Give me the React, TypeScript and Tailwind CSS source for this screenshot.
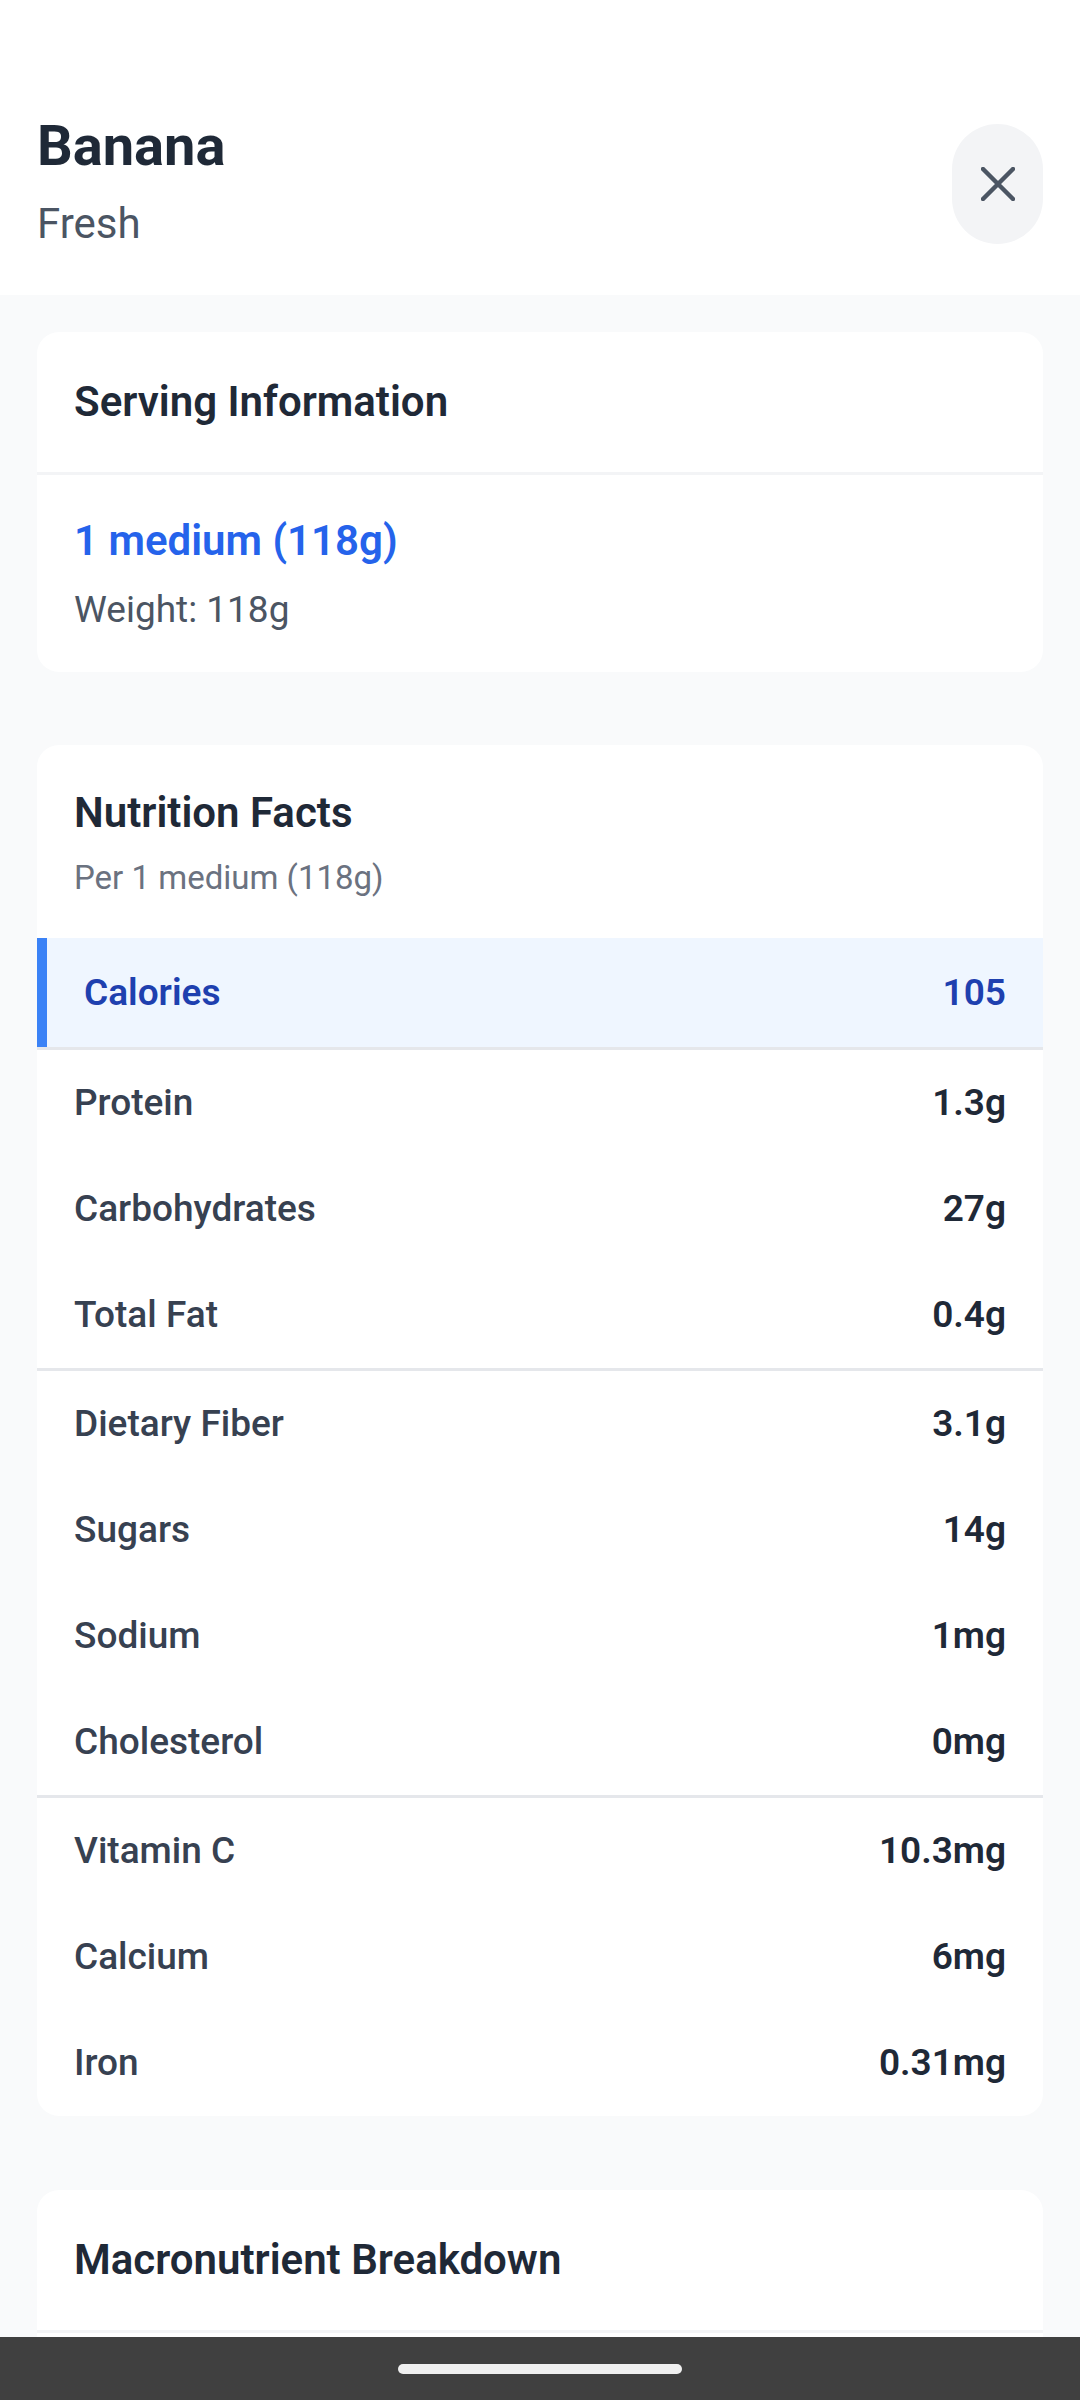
const rows: [string, string][][] = [
  [
    ["Protein", "1.3g"],
    ["Carbohydrates", "27g"],
    ["Total Fat", "0.4g"],
  ],
  [
    ["Dietary Fiber", "3.1g"],
    ["Sugars", "14g"],
    ["Sodium", "1mg"],
    ["Cholesterol", "0mg"],
  ],
  [
    ["Vitamin C", "10.3mg"],
    ["Calcium", "6mg"],
    ["Iron", "0.31mg"],
  ],
];

function Row({ label, value }: { label: string; value: string }) {
  return (
    <div className="flex h-[106px] items-center justify-between px-[37px]">
      <span className="text-[37px] font-medium leading-[50px] text-[#374151]">{label}</span>
      <span className="text-[37px] font-semibold leading-[50px] text-[#1f2937]">{value}</span>
    </div>
  );
}

export default function App() {
  return (
    <div
      className="relative flex h-[2400px] w-[1080px] flex-col overflow-hidden bg-[#f9fafb]"
      style={{ fontFamily: "Roboto, 'Noto Sans', sans-serif" }}
    >
      <header className="flex items-start justify-between bg-white px-[37px] pb-[46px] pt-[113px]">
        <div className="flex flex-col gap-[20px]">
          <h1 className="text-[56px] font-bold leading-[66px] text-[#1f2937]">Banana</h1>
          <p className="text-[42px] leading-[50px] text-[#4b5563]">Fresh</p>
        </div>
        <button
          className="mt-[11px] flex h-[120px] w-[91px] items-center justify-center rounded-full bg-[#f3f4f6]"
          aria-label="Close"
        >
          <svg width="34" height="34" viewBox="0 0 34 34" fill="none">
            <path d="M2 2L32 32M32 2L2 32" stroke="#4b5563" strokeWidth="4.5" strokeLinecap="round" />
          </svg>
        </button>
      </header>

      <main className="flex flex-col px-[37px] pt-[37px]">
        <section className="overflow-hidden rounded-[22px] bg-white">
          <div className="flex h-[143px] items-center border-b-[3px] border-[#f3f4f6] px-[37px]">
            <h2 className="text-[42px] font-semibold leading-[56px] text-[#1f2937]">Serving Information</h2>
          </div>
          <div className="flex flex-col gap-[16px] px-[37px] pb-[37px] pt-[38px]">
            <span className="text-[42px] font-semibold leading-[56px] text-[#2563eb]">1 medium (118g)</span>
            <span className="text-[37px] leading-[50px] text-[#4b5563]">Weight: 118g</span>
          </div>
        </section>

        <section className="mt-[73px] overflow-hidden rounded-[22px] bg-white">
          <div className="flex flex-col gap-[14px] px-[37px] pb-[37px] pt-[40px]">
            <h2 className="text-[42px] font-semibold leading-[56px] text-[#1f2937]">Nutrition Facts</h2>
            <span className="text-[33px] leading-[46px] text-[#6b7280]">Per 1 medium (118g)</span>
          </div>
          <div className="border-b-[3px] border-[#e5e7eb]">
            <div className="flex h-[109px] items-center justify-between border-l-[10px] border-[#3b82f6] bg-[#eff6ff] pl-[37px] pr-[37px]">
              <span className="text-[37px] font-semibold leading-[50px] text-[#1e40af]">Calories</span>
              <span className="text-[37px] font-semibold leading-[50px] text-[#1e40af]">105</span>
            </div>
          </div>
          {rows.map((group, i) => (
            <div key={i} className={i < rows.length - 1 ? "border-b-[3px] border-[#e5e7eb]" : ""}>
              {group.map(([label, value]) => (
                <Row key={label} label={label} value={value} />
              ))}
            </div>
          ))}
        </section>

        <section className="mt-[74px] overflow-hidden rounded-[22px] bg-white">
          <div className="flex h-[143px] items-center border-b-[3px] border-[#f3f4f6] px-[37px]">
            <h2 className="text-[42px] font-semibold leading-[56px] text-[#1f2937]">Macronutrient Breakdown</h2>
          </div>
          <div className="h-[300px]" />
        </section>
      </main>

      <div className="absolute bottom-0 left-0 flex h-[63px] w-full items-center justify-center bg-[#404040]">
        <div className="h-[10px] w-[284px] rounded-full bg-[#f0f0f0]" />
      </div>
    </div>
  );
}
